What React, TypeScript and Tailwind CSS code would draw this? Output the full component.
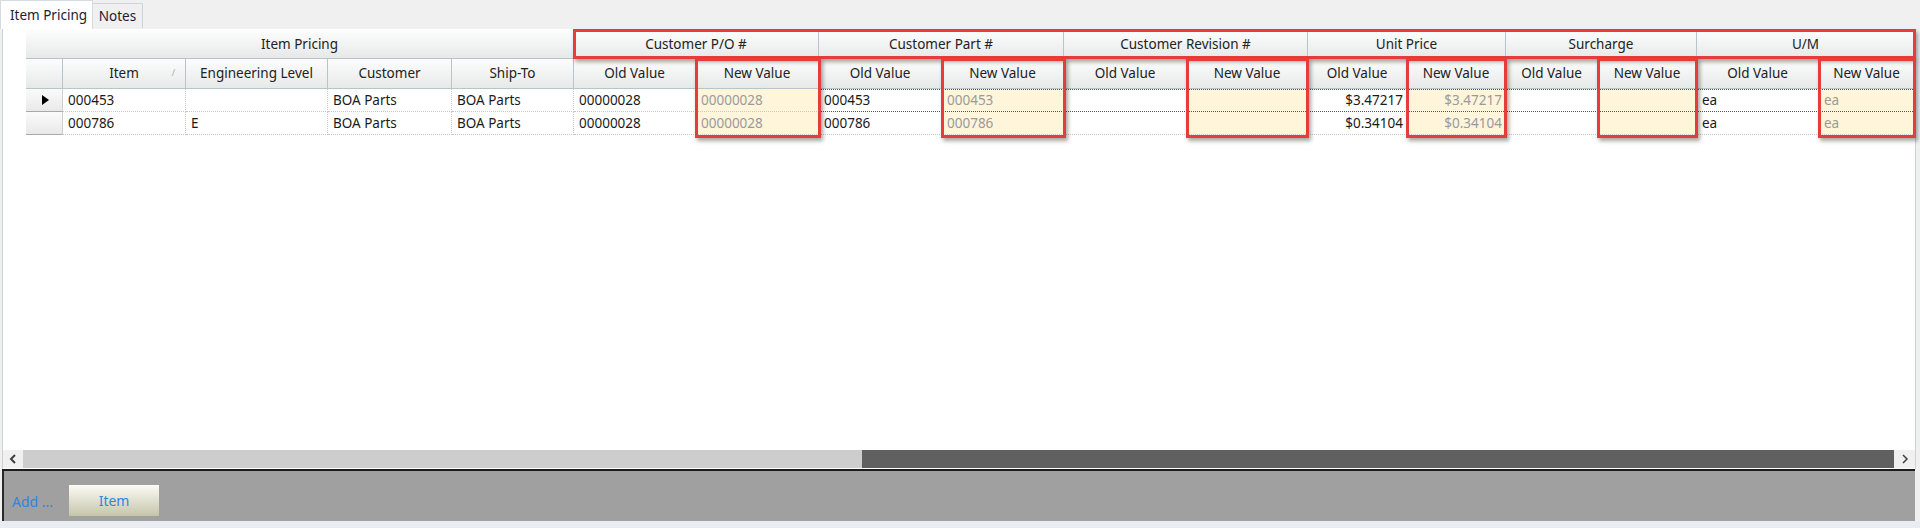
import React from "react";

const font = "font-['Segoe_UI','Noto_Sans','Open_Sans',sans-serif]";

const groups = [
  { label: "Customer P/O #" },
  { label: "Customer Part #" },
  { label: "Customer Revision #" },
  { label: "Unit Price" },
  { label: "Surcharge" },
  { label: "U/M" },
];

const rows = [
  ["000453", "", "BOA Parts", "BOA Parts", "00000028", "00000028", "000453", "000453", "", "", "$3.47217", "$3.47217", "", "", "ea", "ea"],
  ["000786", "E", "BOA Parts", "BOA Parts", "00000028", "00000028", "000786", "000786", "", "", "$0.34104", "$0.34104", "", "", "ea", "ea"],
];

const headCell =
  "flex items-center justify-center bg-gradient-to-b from-[#fdfdfd] to-[#e7e9e9] border-r border-b border-[#b6c6c6] text-[13.5px] text-[#222]";

const boxes = [
  "left-[547px] top-[-1px] w-[1343px] h-[30px]",
  "left-[669px] top-[28px] w-[126px] h-[80px]",
  "left-[915px] top-[28px] w-[125px] h-[80px]",
  "left-[1160px] top-[28px] w-[123px] h-[80px]",
  "left-[1380px] top-[28px] w-[101px] h-[80px]",
  "left-[1571px] top-[28px] w-[101px] h-[80px]",
  "left-[1792px] top-[28px] w-[98px] h-[80px]",
];

const DataCell = ({ value, idx, rowIdx }: { value: string; idx: number; rowIdx: number }) => {
  const isNew = idx >= 5 && idx % 2 === 1;
  const right = idx === 10 || idx === 11;
  const dark = idx >= 6;
  const topLine = dark ? "border-t border-dotted border-t-[#555]" : "";
  const bottom = dark && rowIdx === 0 ? "border-b border-b-[#555]" : "border-b border-b-[#c8c8c8]";
  return (
    <div
      className={`flex items-center pl-[5px] pr-[3px] text-[13.5px] border-r border-dotted border-r-[#c8c8c8] ${bottom} border-dotted ${
        rowIdx === 0 ? topLine : ""
      } ${isNew ? "bg-[#fff5db] text-[#9a9a9a]" : "bg-white text-[#1a1a1a]"} ${right ? "justify-end" : ""}`}
    >
      {value}
    </div>
  );
};

export default function App() {
  return (
    <div className={`w-[1920px] h-[528px] bg-[#f0f0f0] flex flex-col overflow-hidden ${font}`}>
      {/* tabs */}
      <div className="h-[29px] flex items-end">
        <div className="w-[93px] h-[29px] bg-white border-t border-l border-r border-[#d6dbe0] flex items-center pl-[9px] text-[13.5px] text-[#231a33]">
          Item Pricing
        </div>
        <div className="w-[50px] h-[25px] mb-[1px] bg-[#f0f0f0] border-t border-r border-[#d0d4d8] flex items-center justify-center text-[13.5px] text-[#231a33]">
          Notes
        </div>
      </div>

      {/* panel */}
      <div className="h-[440px] ml-[2px] mr-[4px] bg-white border-l border-r border-[#c9d3dc] flex flex-col">
        <div className="relative ml-[23px] mt-[1px] w-[1889px]">
          <div className="grid grid-cols-[37px_123px_142px_124px_122px_122px_123px_123px_122px_123px_121px_99px_99px_92px_99px_122px_96px] grid-rows-[29px_30px_23px_23px]">
            <div className={`${headCell} col-span-5`}>Item Pricing</div>
            {groups.map((g) => (
              <div key={g.label} className={`${headCell} col-span-2`}>
                {g.label}
              </div>
            ))}

            <div className={headCell}></div>
            <div className={`${headCell} relative`}>
              Item
              <span className="absolute right-[10px] top-[7px] text-[9px] text-[#aaa]">/</span>
            </div>
            <div className={headCell}>Engineering Level</div>
            <div className={headCell}>Customer</div>
            <div className={headCell}>Ship-To</div>
            {groups.map((g) => (
              <React.Fragment key={g.label}>
                <div className={headCell}>Old Value</div>
                <div className={`${headCell} text-[#2a1d47]`}>New Value</div>
              </React.Fragment>
            ))}

            {rows.map((r, ri) => (
              <React.Fragment key={ri}>
                <div className="flex items-center pl-[16px] bg-gradient-to-b from-[#fbfbfb] to-[#e9e9e9] border-r border-b border-[#a9a9a9] border-r-[#cfcfcf]">
                  {ri === 0 && (
                    <svg width="7" height="10" viewBox="0 0 7 10">
                      <path d="M0 0 L7 5 L0 10 Z" fill="#000" />
                    </svg>
                  )}
                </div>
                {r.map((v, i) => (
                  <DataCell key={i} value={v} idx={i} rowIdx={ri} />
                ))}
              </React.Fragment>
            ))}
          </div>

          {boxes.map((b, i) => (
            <div
              key={i}
              className={`absolute ${b} border-[3px] border-[#e63c3c] shadow-[2px_3px_4px_rgba(0,0,0,0.35)] pointer-events-none`}
            ></div>
          ))}
        </div>

        <div className="flex-1"></div>

        {/* horizontal scrollbar */}
        <div className="h-[18px] mb-[1px] flex bg-[#cdcdcd]">
          <div className="w-[20px] bg-[#f0f0f0] flex items-center justify-center">
            <svg width="8" height="10" viewBox="0 0 8 10">
              <path d="M6 1 L2 5 L6 9" stroke="#404040" strokeWidth="2" fill="none" />
            </svg>
          </div>
          <div className="w-[839px]"></div>
          <div className="w-[1032px] bg-[#606060]"></div>
          <div className="flex-1 bg-[#f0f0f0] flex items-center justify-center">
            <svg width="8" height="10" viewBox="0 0 8 10">
              <path d="M2 1 L6 5 L2 9" stroke="#404040" strokeWidth="1.5" fill="none" />
            </svg>
          </div>
        </div>
      </div>

      <div className="h-[2px] ml-[2px] mr-[5px] bg-[#1c1c1c]"></div>

      {/* footer */}
      <div className="h-[50px] ml-[2px] mr-[5px] bg-[#a0a0a0] border-l-[2px] border-[#2a2a2a] flex items-center">
        <span className="ml-[8px] mt-[10px] text-[14px] text-[#2d86e0]">Add ...</span>
        <button className="ml-[16px] mt-[9px] w-[90px] h-[31px] bg-gradient-to-b from-[#fbfbf7] to-[#c6c5aa] text-[14px] text-[#2d86e0]">
          Item
        </button>
      </div>
      <div className="flex-1 bg-[#e9edf1]"></div>
    </div>
  );
}
